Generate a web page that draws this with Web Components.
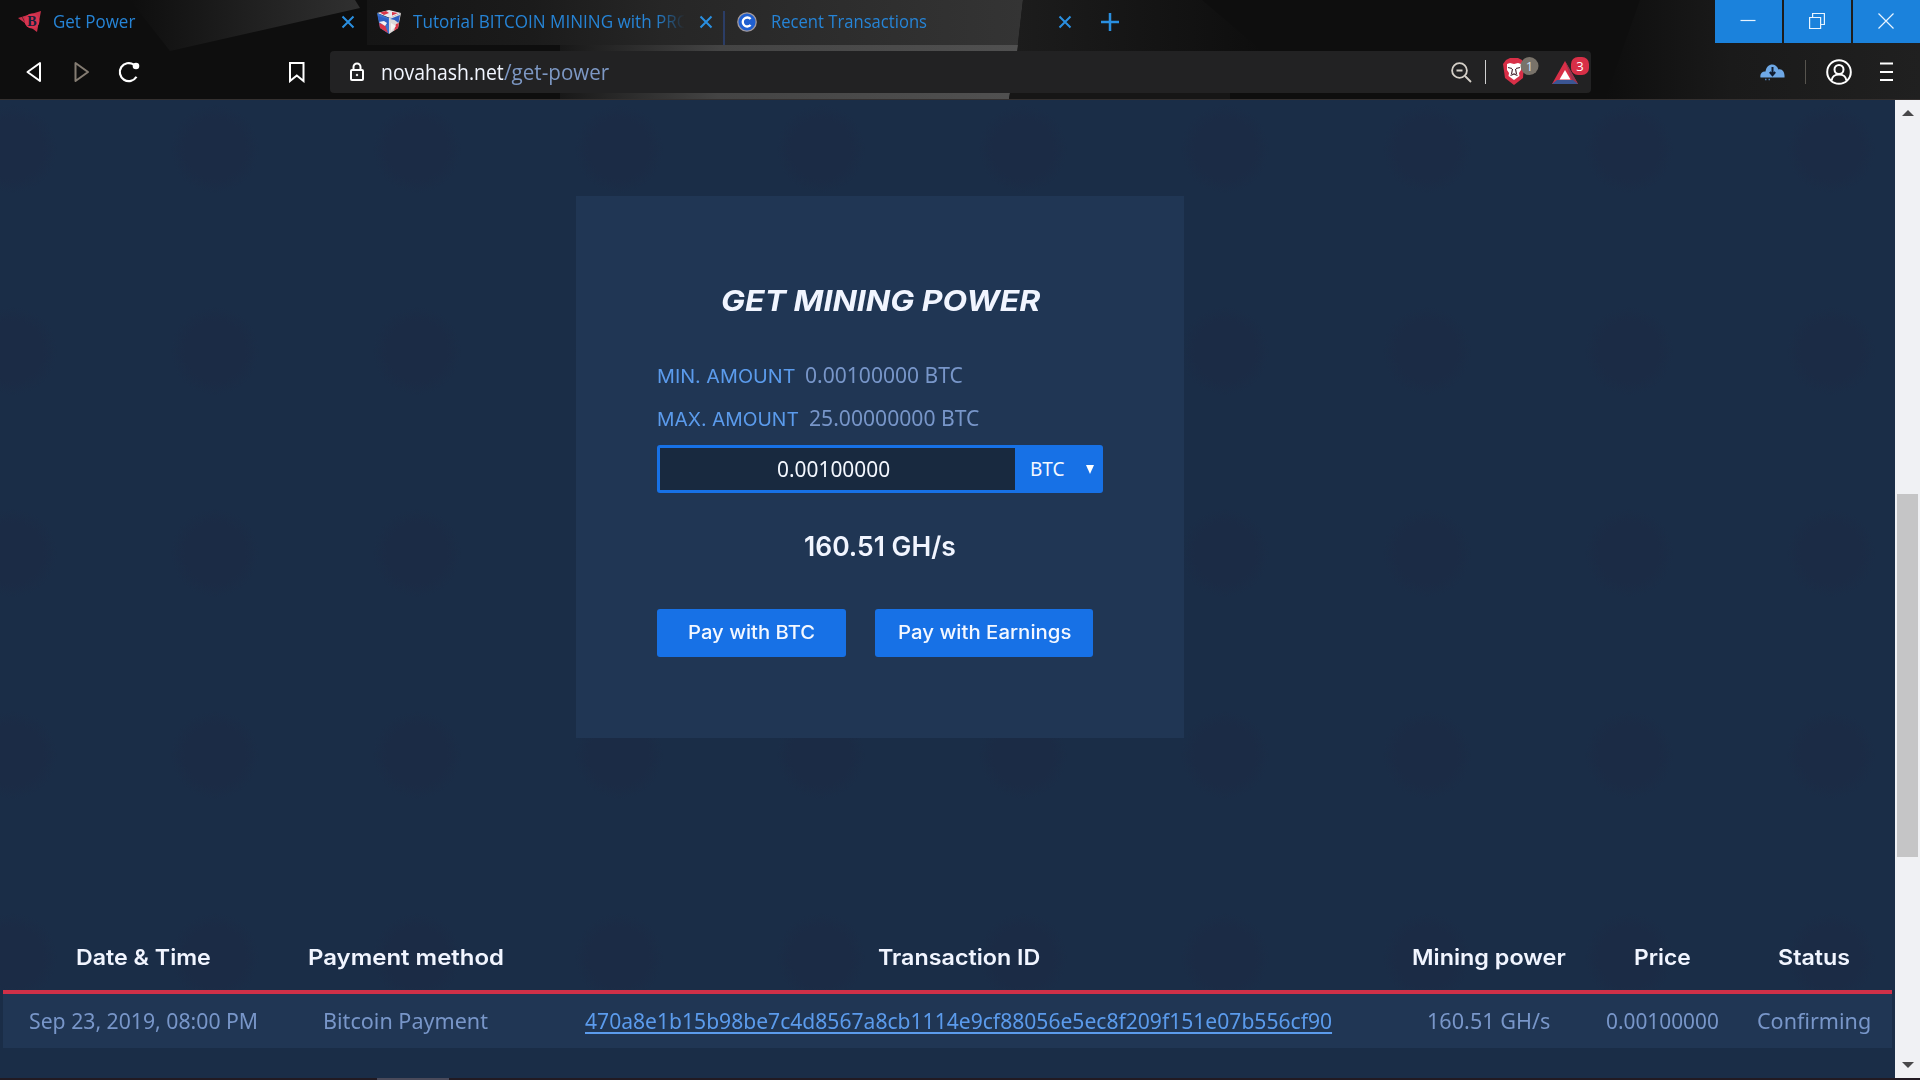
<!DOCTYPE html>
<html lang="en">
<head>
<meta charset="UTF-8">
<title>Get Power</title>
<style>
  :root {
    --sans: "Noto Sans", "Open Sans", sans-serif;
    --display: Inter, "Open Sans", sans-serif;
    --blue: #1771e6;
    --panel: #203654;
    --link: #5b9bec;
    --muted: #7896c9;
    --white: #f1f5ff;
  }
  body {
    margin: 0;
    width: 1920px;
    height: 1080px;
    overflow: hidden;
    background: #1a2d47;
    font-family: var(--sans);
  }
</style>
</head>
<body>
<app-window></app-window>

<script>
// Single line of text stretched to an exact width
class FitText extends HTMLElement {
  constructor() {
    super();
    this.attachShadow({ mode: 'open' });
    this.shadowRoot.innerHTML = `
      <style>
        :host { display: block; flex: none; line-height: 1.4; }
        span { display: inline-block; white-space: pre; transform-origin: 0 50%; }
      </style>
      <span><slot></slot></span>
    `;
  }

  connectedCallback() {
    const width = parseFloat(this.getAttribute('width'));
    const span = this.shadowRoot.querySelector('span');
    this.style.width = width + 'px';
    span.style.transform = `scaleX(${width / span.offsetWidth})`;
  }
}

class BrowserTab extends HTMLElement {
  constructor() {
    super();
    this.attachShadow({ mode: 'open' });
    this.shadowRoot.innerHTML = `
      <style>
        :host {
          display: flex;
          align-items: center;
          box-sizing: border-box;
          height: 44px;
          color: #2684d6;
          font: 18px "Open Sans", var(--sans);
        }
        .icon { flex: none; display: flex; justify-content: center; width: 26px; margin-right: 11px; }
        .label { flex: 1; overflow: hidden; height: 26px; }
        :host([fade]) .label {
          -webkit-mask-image: linear-gradient(90deg, #000 85%, transparent 95%);
          mask-image: linear-gradient(90deg, #000 85%, transparent 95%);
        }
        .close { flex: none; }
      </style>
      <span class="icon"><slot name="icon"></slot></span>
      <span class="label"><slot></slot></span>
      <svg class="close" width="14" height="14" viewBox="0 0 14 14" stroke="#2a8fe0" stroke-width="2"><path d="M1.5 1.5l11 11M12.5 1.5l-11 11"/></svg>
    `;
  }
}

class WindowControls extends HTMLElement {
  constructor() {
    super();
    this.attachShadow({ mode: 'open' });
    this.shadowRoot.innerHTML = `
      <style>
        :host { display: flex; gap: 2px; }
        span { display: flex; width: 67px; height: 43px; background: #1b82dc; }
        svg { margin: 13px auto 0 25px; fill: none; stroke: #e8f4ff; stroke-width: 1.2; }
      </style>
      <span><svg width="16" height="16"><path d="M0.5 7.5h15"/></svg></span>
      <span><svg width="16" height="16"><path d="M.6 4.5h11v11H.6zM3.6 4.5v-4h11.8v11h-4"/></svg></span>
      <span><svg width="16" height="16"><path d="M.5 .5l15 15M15.5 .5l-15 15"/></svg></span>
    `;
  }
}

class TabStrip extends HTMLElement {
  constructor() {
    super();
    this.attachShadow({ mode: 'open' });
    this.shadowRoot.innerHTML = `
      <style>
        :host { display: flex; height: 51px; align-items: flex-start; }
        browser-tab:nth-of-type(1) { width: 367px; padding: 0 12px 0 16px; }
        browser-tab:nth-of-type(2) { width: 356px; padding: 0 10px 0 9px; }
        browser-tab:nth-of-type(3) { width: 347px; padding: 0 0 0 9px; }
        .sep { width: 2px; height: 34px; margin-top: 11px; background: #2b3d66; }
        .plus { margin: 13px 0 0 29px; }
        window-controls { margin-left: auto; }
      </style>
      <browser-tab>
        <svg slot="icon" width="26" height="24" viewBox="0 0 26 24">
          <path d="M2 8L25 1 21 22z" fill="#c9304a"/>
          <path d="M5 5l9 16M10 3l14 14" stroke="#101010" stroke-width="1" opacity=".5"/>
          <circle cx="16" cy="11" r="7.5" fill="#d83450"/>
          <text x="16" y="16" text-anchor="middle" font-family="Liberation Serif" font-weight="bold" font-size="14" fill="#16213a">B</text>
        </svg>
        <fit-text width="82">Get Power</fit-text>
      </browser-tab>
      <browser-tab fade>
        <svg slot="icon" width="26" height="26" viewBox="0 0 26 26">
          <path d="M1 4L13 1l12 3-11 5z" fill="#e8e6ec"/>
          <path d="M1 4l12 5v16l-9-6z" fill="#3a72d0"/>
          <path d="M13 9l12-5-3 15-9 6z" fill="#ddd8d8"/>
          <path d="M4 3.500l6-1.500 3 2-5 2zM16 3l6 1-6 2.500zM3 14l6 2 3 8-8-5zM20 15l3-1-1 5-4 3z" fill="#d83648"/>
          <path d="M14 10l10-4-1.500 8-4-3zM2 7l10 3v6L3 12z" fill="#2d5fc4"/>
          <path d="M3 13l5-1 3 2-2 3zM15 14l5 3-5 5z" fill="#f4f1f1"/>
        </svg>
        <fit-text width="277">Tutorial BITCOIN MINING with PRO</fit-text>
      </browser-tab>
      <i class="sep"></i>
      <browser-tab>
        <svg slot="icon" width="20" height="20" viewBox="0 0 20 20">
          <circle cx="10" cy="10" r="9.200" fill="#1f5fd0" stroke="#a39a9c" stroke-width="1.300"/>
          <path d="M13.600 7A4.500 4.500 0 1 0 13.600 13" fill="none" stroke="#fff" stroke-width="2.300"/>
        </svg>
        <fit-text width="156">Recent Transactions</fit-text>
      </browser-tab>
      <svg class="plus" width="18" height="18" stroke="#2a8fe0" stroke-width="2.500"><path d="M9 0v18M0 9h18"/></svg>
      <window-controls></window-controls>
    `;
  }
}

class AddressBar extends HTMLElement {
  constructor() {
    super();
    this.attachShadow({ mode: 'open' });
    this.shadowRoot.innerHTML = `
      <style>
        :host {
          display: flex;
          align-items: center;
          box-sizing: border-box;
          width: 1261px;
          height: 42px;
          padding: 0 1px 0 19px;
          border-radius: 4px;
          background: #222223;
          font: 21px "Open Sans", var(--sans);
        }
        fit-text { padding-top: 2px; }
        .domain { margin-left: 16px; color: #f2f6ff; }
        .path { color: #7d98c4; }
        .sep { width: 1px; height: 24px; margin: 0 16px 0 13px; background: #d0d0d0; }
        .glass { margin-left: auto; }
        .rewards { margin-left: 13px; }
      </style>
      <svg width="16" height="20" viewBox="0 0 16 20" fill="none" stroke="#fff" stroke-width="2">
        <rect x="2" y="8" width="12" height="10" rx="1"/><path d="M4.500 8V5a3.500 3.500 0 0 1 7 0v3"/><circle cx="8" cy="13" r=".8" fill="#fff" stroke-width="1"/>
      </svg>
      <fit-text class="domain" width="123">novahash.net</fit-text>
      <fit-text class="path" width="105">/get-power</fit-text>
      <svg class="glass" width="21" height="21" viewBox="0 0 21 21" fill="none" stroke="#d5d0c8" stroke-width="1.800">
        <circle cx="8.500" cy="8.500" r="7.400"/><path d="M5.500 8.500h6M14 14l6 6"/>
      </svg>
      <i class="sep"></i>
      <svg width="37" height="30" viewBox="0 0 37 30">
        <path d="M4 3l4-2h8l4 2 2 4-1 14-9 7-9-7L1 7z" fill="#d82f47"/>
        <path d="M5 7l3-1 4 1 4-1 3 1v6l-2 3 .5 3-5.500 4L6.500 19l.5-3-2-3z" fill="#fff"/>
        <path d="M6 10.500l4 1M18 10.500l-4 1M10.500 12l-1 5M13.500 12l1 5M8.500 18.500l3.500-1.500 3.500 1.500" stroke="#4a2a34" stroke-width="1.200" fill="none"/>
        <circle cx="27.500" cy="9" r="9" fill="#79736a"/>
        <text x="27.500" y="14" text-anchor="middle" font-size="13" font-family="Open Sans" fill="#cfe0f5">1</text>
      </svg>
      <svg class="rewards" width="38" height="30" viewBox="0 0 38 30">
        <path d="M13 4L26 27H0z" fill="#d82f47"/>
        <path d="M13 4l13 23-6-4z" fill="#9a3450"/>
        <path d="M0 27l5-4h16l5 4z" fill="#3b5593"/>
        <path d="M13 13l5.500 9.500h-11z" fill="#fff"/>
        <rect x="19" y="0" width="18" height="18" rx="7" fill="#d82f47"/>
        <text x="28" y="14" text-anchor="middle" font-size="13" font-family="Open Sans" fill="#fff">3</text>
      </svg>
    `;
  }
}

class BrowserToolbar extends HTMLElement {
  constructor() {
    super();
    this.attachShadow({ mode: 'open' });
    this.shadowRoot.innerHTML = `
      <style>
        :host { display: flex; align-items: center; height: 42px; padding: 0 26px 0 25px; }
        svg { flex: none; fill: none; stroke: #fff; stroke-width: 2; }
        .fwd { margin-left: 32px; }
        .reload { margin-left: 28px; }
        .mark { margin-left: 148px; }
        address-bar { margin-left: 24px; }
        .cloud { margin-left: auto; }
        .sep { width: 1px; height: 24px; margin: 0 20px; background: #57544e; }
        .menu { margin-left: 27px; }
      </style>
      <svg width="17" height="22" viewBox="0 0 17 22"><path d="M15 2v18L2.500 11z" stroke-linejoin="round"/></svg>
      <svg class="fwd" width="16" height="22" viewBox="0 0 16 22" style="stroke:#847c72"><path d="M1.500 2v18L14 11z" stroke-linejoin="round"/></svg>
      <svg class="reload" width="22" height="22" viewBox="0 0 22 22"><path d="M18.500 15.800A9 9 0 1 1 15.800 3.600" stroke-width="2.200"/><circle cx="18" cy="5" r="3.300" fill="#fff" stroke="none"/></svg>
      <svg class="mark" width="18" height="22" viewBox="0 0 18 22"><path d="M2 2h13.500v18L8.800 14.500 2 20z"/></svg>
      <address-bar></address-bar>
      <svg class="cloud" width="25" height="18" viewBox="0 0 25 18">
        <path d="M.5 14.500c-1-4 2-6.500 5-6 1-8 10-10 13-2 4-1 6.500 3 6 8z" fill="#6ea8e6" stroke="none"/>
        <path d="M12.500 4v8M9.800 9l2.700 3.200L15.200 9" stroke="#101c30" stroke-width="2"/>
        <path d="M5 16.500h6" stroke="#4f7db3" stroke-width="1.500" stroke-dasharray="1.500 2"/>
      </svg>
      <i class="sep"></i>
      <svg width="26" height="26" viewBox="0 0 26 26"><circle cx="13" cy="13" r="11.800"/><circle cx="13" cy="10.500" r="4.500"/><path d="M5.500 21.500c1-5 3.500-6 7.500-6s6.500 1 7.500 6"/></svg>
      <svg class="menu" width="15" height="20" viewBox="0 0 15 20"><path d="M1 1.500h13M1 10h13M1 18h13" stroke-width="2.200"/></svg>
    `;
  }
}

class BrowserChrome extends HTMLElement {
  constructor() {
    super();
    this.attachShadow({ mode: 'open' });
    this.shadowRoot.innerHTML = `
      <style>
        :host { display: block; position: relative; height: 100px; background: #0e0e0e; }
        .backdrop { position: absolute; inset: 0; }
        .bars { position: relative; height: 100px; }
      </style>
      <svg class="backdrop" width="1920" height="100">
        <defs>
          <linearGradient id="ray"><stop offset="0" stop-color="#0e0e0e"/><stop offset="1" stop-color="#303030"/></linearGradient>
          <linearGradient id="tabs"><stop offset="0" stop-color="#151515"/><stop offset=".25" stop-color="#1b1b1b"/><stop offset=".45" stop-color="#262626"/><stop offset="1" stop-color="#343434"/></linearGradient>
          <linearGradient id="edge"><stop offset="0" stop-color="#181818"/><stop offset=".35" stop-color="#444"/><stop offset="1" stop-color="#505050"/></linearGradient>
          <linearGradient id="dim"><stop offset="0" stop-color="#1c1c1c"/><stop offset="1" stop-color="#0e0e0e"/></linearGradient>
          <linearGradient id="right"><stop offset="0" stop-color="#0e0e0e"/><stop offset=".4" stop-color="#1a1a1a"/><stop offset="1" stop-color="#202020"/></linearGradient>
        </defs>
        <path d="M130 0H355l5 8L170 51z" fill="url(#ray)"/>
        <path d="M367 0h656l-5 45H367z" fill="url(#tabs)"/>
        <path d="M1023 0h179l60 51H1017z" fill="url(#dim)"/>
        <path d="M560 45h458l-1 6H560z" fill="url(#edge)"/>
        <path d="M560 93h450l-1 6H560z" fill="url(#edge)"/>
        <path d="M1010 93h220v6H1009z" fill="#161616"/>
        <path d="M1640 0h280v99H1605z" fill="url(#right)"/>
        <path d="M0 99.500h1920" stroke="#34302f"/>
      </svg>
      <div class="bars">
        <tab-strip></tab-strip>
        <browser-toolbar></browser-toolbar>
      </div>
    `;
  }
}

class AmountField extends HTMLElement {
  constructor() {
    super();
    this.attachShadow({ mode: 'open' });
    this.shadowRoot.innerHTML = `
      <style>
        :host { display: flex; box-sizing: border-box; height: 48px; border-radius: 3px; background: var(--blue); color: #f4f8ff; }
        .value { display: flex; align-items: center; justify-content: center; width: 355px; margin: 3px 0 3px 3px; padding: 0 9px 2px 0; box-sizing: border-box; background: #18293f; font-size: 22px; }
        .unit { display: flex; align-items: center; flex: 1; padding: 0 9px 0 15px; font-size: 19px; }
        svg { margin-left: auto; }
      </style>
      <div class="value"><fit-text width="113">0.00100000</fit-text></div>
      <div class="unit">
        <fit-text width="35">BTC</fit-text>
        <svg width="8" height="9"><path d="M0 0h8l-4 9z" fill="#fff"/></svg>
      </div>
    `;
  }
}

class PayButton extends HTMLElement {
  constructor() {
    super();
    this.attachShadow({ mode: 'open' });
    this.shadowRoot.innerHTML = `
      <style>
        :host {
          display: flex;
          align-items: center;
          justify-content: center;
          height: 48px;
          border-radius: 3px;
          background: var(--blue);
          color: #f4f8ff;
          font: 500 18.500px var(--display);
        }
      </style>
      <slot></slot>
    `;
  }
}

class PowerCard extends HTMLElement {
  constructor() {
    super();
    this.attachShadow({ mode: 'open' });
    this.shadowRoot.innerHTML = `
      <style>
        :host { display: flex; flex-direction: column; box-sizing: border-box; width: 608px; height: 542px; padding: 85px 81px 0; background: var(--panel); }
        .title { align-self: center; height: 41px; color: var(--white); font: italic 700 29px var(--display); line-height: 1.4; }
        .limit { display: flex; align-items: center; height: 43px; gap: 10px; font-size: 22px; color: var(--muted); }
        .limit:nth-of-type(1) { margin-top: 32px; }
        .label { color: var(--link); font: 18.500px var(--display); line-height: 1.4; padding-top: 3px; }
        .amount { padding-bottom: 2px; }
        amount-field { margin-top: 5px; }
        .power { align-self: center; height: 38px; margin-top: 35px; color: var(--white); font: 600 27px var(--display); line-height: 1.4; }
        .buttons { display: flex; gap: 29px; margin-top: 43px; }
      </style>
      <fit-text class="title" width="319">GET MINING POWER</fit-text>
      <div class="limit"><fit-text class="label" width="138">MIN. AMOUNT</fit-text><fit-text class="amount" width="158">0.00100000 BTC</fit-text></div>
      <div class="limit"><fit-text class="label" width="142">MAX. AMOUNT</fit-text><fit-text class="amount" width="170">25.00000000 BTC</fit-text></div>
      <amount-field></amount-field>
      <fit-text class="power" width="152">160.51 GH/s</fit-text>
      <div class="buttons">
        <pay-button style="width:189px"><fit-text width="127">Pay with BTC</fit-text></pay-button>
        <pay-button style="width:218px"><fit-text width="173">Pay with Earnings</fit-text></pay-button>
      </div>
    `;
  }
}

class TransactionTable extends HTMLElement {
  constructor() {
    super();
    this.attachShadow({ mode: 'open' });
    this.shadowRoot.innerHTML = `
      <style>
        :host { display: block; margin: 0 3px; }
        .row { display: grid; grid-template-columns: 280px 245px 861px 199px 148px 156px; justify-items: center; align-items: center; }
        .head { height: 66px; border-bottom: 4px solid #cf3048; color: var(--white); font: 600 22px var(--display); }
        .body { height: 54px; background: var(--panel); color: var(--muted); font-size: 22.500px; }
        .hash { color: var(--link); text-decoration: underline; text-decoration-thickness: 2px; text-underline-offset: 3px; }
      </style>
      <div class="row head"></div>
      <div class="row body"></div>
    `;
    const head = [['Date & Time', 135], ['Payment method', 196], ['Transaction ID', 162], ['Mining power', 154], ['Price', 57], ['Status', 72]];
    const body = [
      ['Sep 23, 2019, 08:00 PM', 229], ['Bitcoin Payment', 165],
      ['470a8e1b15b98be7c4d8567a8cb1114e9cf88056e5ec8f209f151e07b556cf90', 747],
      ['160.51 GH/s', 123], ['0.00100000', 113], ['Confirming', 114]
    ];
    this.fill('.head', head);
    this.fill('.body', body);
  }

  fill(selector, cells) {
    const row = this.shadowRoot.querySelector(selector);
    cells.forEach(([text, width]) => {
      const cell = document.createElement('fit-text');
      cell.setAttribute('width', width);
      if (text.length > 40) {
        const link = document.createElement('span');
        link.className = 'hash';
        link.textContent = text;
        cell.append(link);
      } else {
        cell.textContent = text;
      }
      row.append(cell);
    });
  }
}

class ScrollBar extends HTMLElement {
  constructor() {
    super();
    this.attachShadow({ mode: 'open' });
    this.shadowRoot.innerHTML = `
      <style>
        :host { display: flex; flex-direction: column; align-items: center; box-sizing: border-box; width: 25px; padding: 10px 0; background: #f0f1f4; }
        .thumb { width: 21px; height: 363px; margin-top: 378px; background: #c5c5c6; }
        .down { margin-top: auto; }
      </style>
      <svg width="12" height="6"><path d="M6 0l6 6H0z" fill="#48484a"/></svg>
      <div class="thumb"></div>
      <svg class="down" width="12" height="6"><path d="M0 0h12L6 6z" fill="#48484a"/></svg>
    `;
  }
}

class AppWindow extends HTMLElement {
  constructor() {
    super();
    this.attachShadow({ mode: 'open' });
    this.shadowRoot.innerHTML = `
      <style>
        :host { display: flex; flex-direction: column; height: 1080px; }
        .view { display: flex; height: 978px; }
        main {
          width: 1895px;
          background: radial-gradient(circle at 50% 50%, #1b2b45 30px, transparent 44px) 114px -52px / 202px 202px, #1a2d47;
        }
        power-card { margin: 96px 0 0 576px; }
        transaction-table { margin-top: 186px; }
        .taskbar { height: 2px; background: #211a22; }
        .taskbar i { display: block; width: 72px; height: 2px; margin-left: 377px; background: #4a4a5a; }
      </style>
      <browser-chrome></browser-chrome>
      <div class="view">
        <main>
          <power-card></power-card>
          <transaction-table></transaction-table>
        </main>
        <scroll-bar></scroll-bar>
      </div>
      <div class="taskbar"><i></i></div>
    `;
  }
}

customElements.define('fit-text', FitText);
customElements.define('browser-tab', BrowserTab);
customElements.define('window-controls', WindowControls);
customElements.define('tab-strip', TabStrip);
customElements.define('address-bar', AddressBar);
customElements.define('browser-toolbar', BrowserToolbar);
customElements.define('browser-chrome', BrowserChrome);
customElements.define('amount-field', AmountField);
customElements.define('pay-button', PayButton);
customElements.define('power-card', PowerCard);
customElements.define('transaction-table', TransactionTable);
customElements.define('scroll-bar', ScrollBar);
customElements.define('app-window', AppWindow);
</script>
</body>
</html>
